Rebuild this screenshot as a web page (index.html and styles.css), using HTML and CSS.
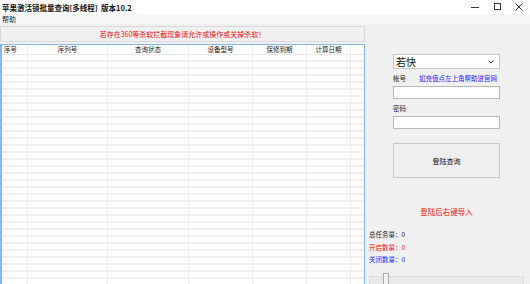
FILE: index.html
```html
<!DOCTYPE html>
<html lang="zh-CN">
<head>
    <meta charset="UTF-8">
    <title>苹果激活锁批量查询</title>
    <link rel="stylesheet" href="styles.css">
</head>
<body>
    <div class="titlebar">
        <span class="title">苹果激活锁批量查询[多线程]&nbsp;&nbsp;版本10.2</span>
        <div class="win-buttons">
            <svg width="10" height="10" viewBox="0 0 10 10"><line x1="1" y1="5.5" x2="9" y2="5.5" stroke="#333" stroke-width="1"/></svg>
            <svg width="10" height="10" viewBox="0 0 10 10"><rect x="2.5" y="1.5" width="6" height="6" fill="none" stroke="#333" stroke-width="1"/></svg>
            <svg width="10" height="10" viewBox="0 0 10 10"><path d="M1.5 1.5 L8.5 8.5 M8.5 1.5 L1.5 8.5" stroke="#333" stroke-width="1"/></svg>
        </div>
    </div>
    <div class="menubar"><span>帮助</span></div>

    <div class="main">
        <div class="left">
            <div class="notice">若存在360等杀软拦截现象请允许或操作或关掉杀软！</div>
            <div class="grid">
                <div class="col c1"><div class="head left-text">序号</div><div class="rows"></div></div>
                <div class="col c2"><div class="head">序列号</div><div class="rows"></div></div>
                <div class="col c3"><div class="head">查询状态</div><div class="rows"></div></div>
                <div class="col c4"><div class="head">设备型号</div><div class="rows"></div></div>
                <div class="col c5"><div class="head">保修到期</div><div class="rows"></div></div>
                <div class="col c6"><div class="head">计算日期</div><div class="rows"></div></div>
                <div class="col c7"><div class="head"></div><div class="rows"></div></div>
            </div>
        </div>

        <div class="right">
            <div class="form">
                <div class="combo">
                    <span>若快</span>
                    <svg width="6" height="4" viewBox="0 0 6 4"><path d="M0.5 0.5 L3 3 L5.5 0.5" fill="none" stroke="#444" stroke-width="1"/></svg>
                </div>
                <div class="label-row">
                    <span class="label">帐号</span>
                    <a class="link" href="#">如充值点左上角帮助进官网</a>
                </div>
                <div class="textbox"></div>
                <div class="label-row">
                    <span class="label">密码</span>
                </div>
                <div class="textbox"></div>
                <button class="login" type="button">登陆查询</button>
                <p class="hint">登陆后右键导入</p>
            </div>
            <div class="stats">
                <p>总任务量：0</p>
                <p class="red">开启数量：0</p>
                <p class="blue">关闭数量：0</p>
            </div>
            <div class="slider">
                <div class="thumb"></div>
            </div>
        </div>
    </div>
</body>
</html>
```

FILE: styles.css
```css
body {
    margin: 0;
    width: 530px;
    height: 284px;
    overflow: hidden;
    background-color: #f0f0f0;
    font-family: "Noto Sans CJK SC", "Liberation Sans", sans-serif;
    font-size: 7px;
    color: #222;
    display: flex;
    flex-direction: column;
}

p {
    margin: 0;
}

.titlebar {
    height: 14px;
    background-color: #fff;
    display: flex;
    align-items: center;
    justify-content: space-between;
    flex-shrink: 0;
}

.title {
    font-weight: bold;
    font-size: 7.5px;
    padding-left: 2px;
    color: #111;
}

.win-buttons {
    display: flex;
    gap: 12px;
    padding-right: 6px;
    align-items: center;
}

.win-buttons svg {
    display: block;
}

.menubar {
    height: 10px;
    background-color: #f7f7f7;
    padding-left: 2px;
    display: flex;
    align-items: center;
    flex-shrink: 0;
}

.main {
    flex: 1;
    display: flex;
    min-height: 0;
}

.left {
    width: 365px;
    display: flex;
    flex-direction: column;
    padding-top: 2px;
}

.notice {
    height: 14px;
    border: 1px solid #dadada;
    color: #ee1111;
    text-align: center;
    line-height: 14px;
    margin-bottom: 2px;
}

.grid {
    flex: 1;
    display: flex;
    background-color: #fff;
    border: 1px solid #82b8ee;
    border-left-width: 2px;
    border-bottom: none;
    width: 362px;
}

.col {
    display: flex;
    flex-direction: column;
    border-right: 1px solid #ececec;
    box-sizing: border-box;
}

.head {
    height: 9px;
    line-height: 9px;
    text-align: center;
    color: #222;
    font-size: 6.5px;
    border-bottom: 1px solid #e8e8e8;
}

.head.left-text {
    text-align: left;
    padding-left: 2px;
}

.rows {
    flex: 1;
    background: repeating-linear-gradient(to bottom, #fff 0 5px, #f0f0f0 5px 7px);
}

.c1 { width: 26px; }
.c2 { width: 80px; }
.c3 { width: 81px; }
.c4 { width: 64px; }
.c5 { width: 54px; }
.c6 { width: 44px; }
.c7 { width: 13px; border-right: none; }

.right {
    flex: 1;
    display: flex;
    flex-direction: column;
    padding-left: 4px;
}

.form {
    display: flex;
    flex-direction: column;
    padding-left: 24px;
    width: 107px;
    padding-top: 30px;
}

.combo {
    height: 13px;
    border: 1px solid #c8c8c8;
    background-color: #fff;
    display: flex;
    align-items: center;
    justify-content: space-between;
    padding: 0 5px 0 2px;
    font-size: 10px;
    color: #111;
}

.label-row {
    display: flex;
    gap: 13px;
    height: 16px;
    align-items: center;
    padding-top: 1px;
    white-space: nowrap;
    font-size: 6.5px;
}

.link {
    color: #1a1aff;
    text-decoration: none;
}

.textbox {
    height: 11px;
    border: 1px solid #b9b9b9;
    background-color: #fff;
}

.login {
    margin-top: 14px;
    height: 35px;
    border: 1px solid #c6c6c6;
    background-color: #eeeeee;
    font-family: inherit;
    font-size: 7px;
    color: #111;
    padding: 0;
}

.hint {
    color: #ee1111;
    text-align: center;
    font-size: 7.5px;
    margin-top: 28px;
}

.stats {
    display: flex;
    flex-direction: column;
    margin-top: 13px;
    gap: 3px;
    font-size: 6.5px;
}

.stats p {
    line-height: 9.5px;
}

.red {
    color: #ee1111;
}

.blue {
    color: #1a1aff;
}

.slider {
    margin-top: auto;
    height: 7px;
    width: 153px;
    border: 1px solid #dcdcdc;
    border-bottom: none;
    background-color: #e9e9e9;
    position: relative;
}

.thumb {
    position: absolute;
    left: 13px;
    top: -4px;
    width: 4px;
    height: 12px;
    background-color: #f4f4f4;
    border: 1px solid #aaa;
    border-bottom: none;
}
```
